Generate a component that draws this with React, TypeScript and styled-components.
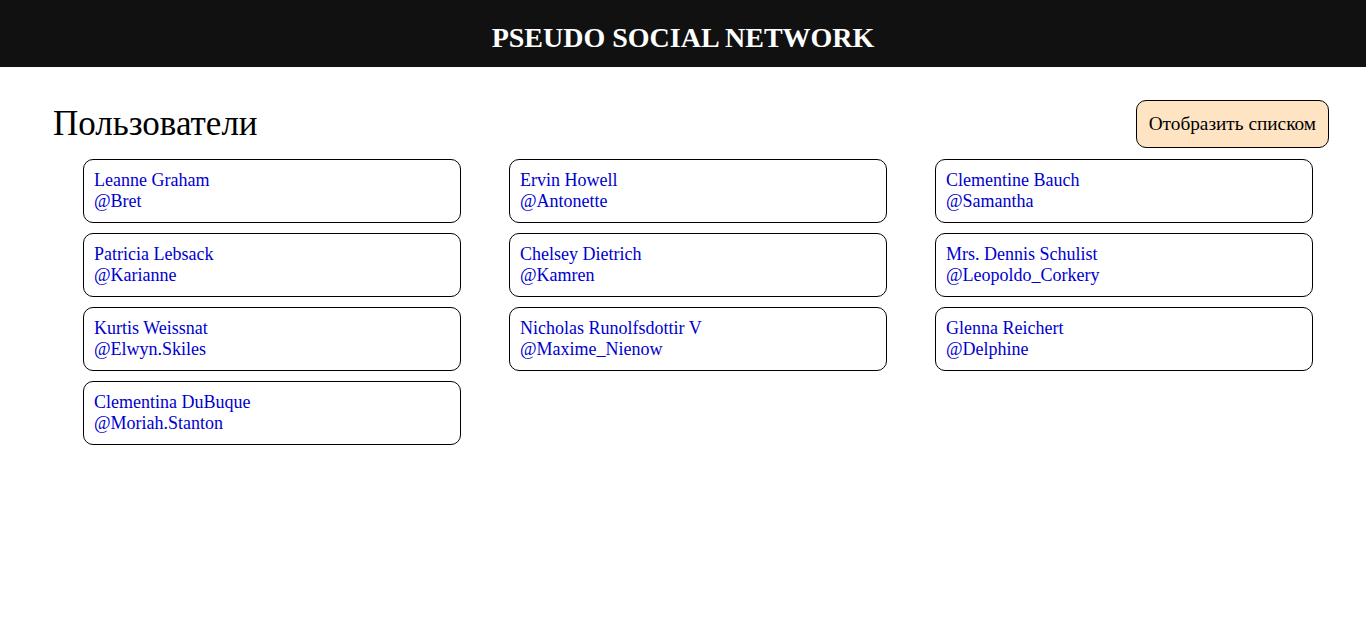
import React from "react";
import styled, { createGlobalStyle } from "styled-components";

const Global = createGlobalStyle`
  body { margin: 0; background: #fff; font-family: "Liberation Serif", "Times New Roman", serif; }
`;

const Header = styled.header`
  height: 67px;
  background: #111111;
  display: flex;
  align-items: center;
  justify-content: center;
`;

const Brand = styled.h1`
  margin: 0;
  color: #fff;
  font-size: 28px;
  font-weight: bold;
  padding-top: 8px;
`;

const Main = styled.main`
  padding: 33px 37px 0 52px;
`;

const TopBar = styled.div`
  display: flex;
  align-items: center;
  justify-content: space-between;
  height: 48px;
`;

const Title = styled.h2`
  margin: 0 0 0 1px;
  font-size: 35px;
  font-weight: normal;
  color: #000;
`;

const ToggleButton = styled.button`
  height: 48px;
  padding: 0 12px;
  background: bisque;
  border: 1px solid #000;
  border-radius: 10px;
  font-family: "Liberation Serif", "Times New Roman", serif;
  font-size: 19.3px;
  color: #000;
`;

const Grid = styled.div`
  margin: 11px 16px 0 31px;
  display: grid;
  grid-template-columns: repeat(3, 378px);
  column-gap: 48px;
  row-gap: 10px;
`;

const Card = styled.a`
  display: block;
  box-sizing: border-box;
  height: 64px;
  padding: 10px 10px;
  border: 1px solid #000;
  border-radius: 10px;
  color: #0000cd;
  text-decoration: none;
  font-size: 18px;
  line-height: 21px;
`;

const users = [
  ["Leanne Graham", "Bret"],
  ["Ervin Howell", "Antonette"],
  ["Clementine Bauch", "Samantha"],
  ["Patricia Lebsack", "Karianne"],
  ["Chelsey Dietrich", "Kamren"],
  ["Mrs. Dennis Schulist", "Leopoldo_Corkery"],
  ["Kurtis Weissnat", "Elwyn.Skiles"],
  ["Nicholas Runolfsdottir V", "Maxime_Nienow"],
  ["Glenna Reichert", "Delphine"],
  ["Clementina DuBuque", "Moriah.Stanton"],
];

export default function App() {
  return (
    <>
      <Global />
      <Header>
        <Brand>PSEUDO SOCIAL NETWORK</Brand>
      </Header>
      <Main>
        <TopBar>
          <Title>Пользователи</Title>
          <ToggleButton>Отобразить списком</ToggleButton>
        </TopBar>
        <Grid>
          {users.map(([name, nick]) => (
            <Card key={nick} href="#">
              <div>{name}</div>
              <div>@{nick}</div>
            </Card>
          ))}
        </Grid>
      </Main>
    </>
  );
}
